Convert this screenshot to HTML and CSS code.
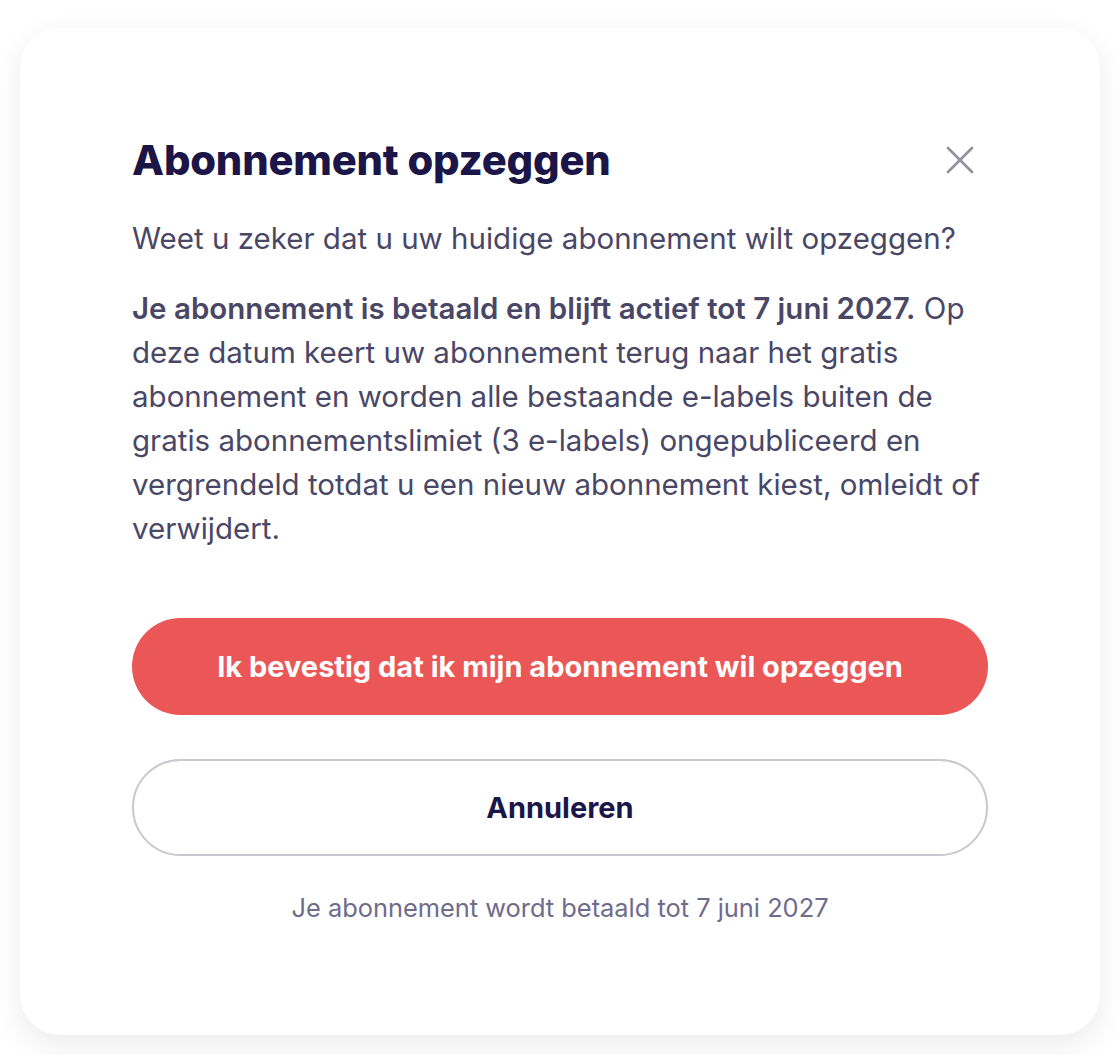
FILE: index.html
```html
<!DOCTYPE html>
<html lang="nl">
<head>
<meta charset="utf-8">
<link rel="stylesheet" href="styles.css">
<title>Abonnement opzeggen</title>
</head>
<body>
<div class="page">
  <div class="card">
    <div class="header">
      <h1 class="title">Abonnement opzeggen</h1>
      <button class="close" aria-label="Sluiten">
        <svg width="28" height="28" viewBox="0 0 28 28"><path d="M2 2 L26 26 M26 2 L2 26" stroke="#928f9e" stroke-width="2.6" stroke-linecap="round"/></svg>
      </button>
    </div>
    <p class="lead">Weet u zeker dat u uw huidige abonnement wilt opzeggen?</p>
    <p class="body"><strong>Je abonnement is betaald en blijft actief tot 7 juni 2027.</strong> Op deze datum keert uw abonnement terug naar het gratis abonnement en worden alle bestaande e-labels buiten de gratis abonnementslimiet (3 e-labels) ongepubliceerd en vergrendeld totdat u een nieuw abonnement kiest, omleidt of verwijdert.</p>
    <div class="actions">
      <button class="btn btn-danger">Ik bevestig dat ik mijn abonnement wil opzeggen</button>
      <button class="btn btn-outline">Annuleren</button>
    </div>
    <p class="note">Je abonnement wordt betaald tot 7 juni 2027</p>
  </div>
</div>
</body>
</html>
```

FILE: styles.css
```css
html, body {
  margin: 0;
  padding: 0;
  background: #ffffff;
}
body {
  font-family: "Inter", "Noto Sans", sans-serif;
}
.page {
  padding: 28px 20px 20px 20px;
}
.card {
  background: #ffffff;
  border-radius: 40px;
  box-shadow: 0 10px 30px rgba(0, 0, 0, 0.08);
  padding: 108px 112px 100px 112px;
  height: 1007px;
  box-sizing: border-box;
}
.header {
  display: flex;
  align-items: center;
  justify-content: space-between;
}
.title {
  margin: 0;
  font-size: 41.7px;
  line-height: 48px;
  font-weight: 800;
  color: #1b1647;
  letter-spacing: -0.2px;
}
.close {
  background: none;
  border: 0;
  padding: 0;
  margin-right: 14px;
  width: 28px;
  height: 28px;
  display: flex;
}
.lead {
  margin: 32px 0 0 0;
  font-size: 29.5px;
  line-height: 44px;
  color: #4a4766;
}
.body {
  margin: 26px 0 0 0;
  font-size: 29.5px;
  line-height: 44px;
  color: #4a4766;
}
.body strong {
  font-weight: 600;
}
.actions {
  margin-top: 68px;
  display: flex;
  flex-direction: column;
  gap: 44px;
}
.btn {
  height: 97px;
  border-radius: 49px;
  font-family: inherit;
  font-size: 29px;
  font-weight: 700;
  width: 100%;
}
.btn-danger {
  background: #eb5757;
  color: #ffffff;
  border: 0;
}
.btn-outline {
  background: #ffffff;
  color: #1b1647;
  border: 2px solid #c9c8cf;
}
.note {
  margin: 36px 0 0 0;
  text-align: center;
  font-size: 25.4px;
  line-height: 32px;
  color: #6f6b8c;
}
```
